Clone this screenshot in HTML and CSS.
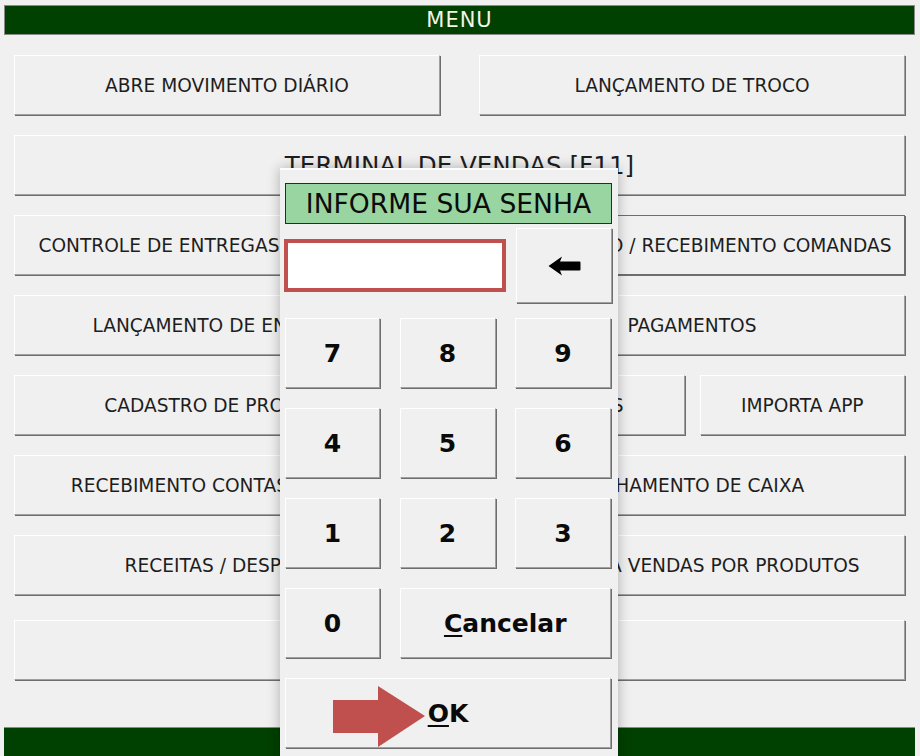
FILE: index.html
```html
<!DOCTYPE html>
<html lang="pt-BR">
<head>
<meta charset="utf-8">
<title>Menu</title>
<link rel="stylesheet" href="styles.css">
</head>
<body>
<div class="screen">
  <div class="titlebar">MENU</div>
  <div class="menu">
    <div class="row">
      <button class="btn">ABRE MOVIMENTO DIÁRIO</button>
      <button class="btn">LANÇAMENTO DE TROCO</button>
    </div>
    <div class="row row-single">
      <button class="btn btn-big">TERMINAL DE VENDAS [F11]</button>
    </div>
    <div class="row">
      <button class="btn">CONTROLE DE ENTREGAS DOS PEDIDOS</button>
      <button class="btn btn-focus">LANÇAMENTO / RECEBIMENTO COMANDAS</button>
    </div>
    <div class="row">
      <button class="btn">LANÇAMENTO DE ENTRADAS</button>
      <button class="btn">PAGAMENTOS</button>
    </div>
    <div class="row">
      <button class="btn">CADASTRO DE PRODUTOS</button>
      <div class="split">
        <button class="btn">PEDIDOS</button>
        <button class="btn">IMPORTA APP</button>
      </div>
    </div>
    <div class="row">
      <button class="btn">RECEBIMENTO CONTAS CLIENTES</button>
      <button class="btn">FECHAMENTO DE CAIXA</button>
    </div>
    <div class="row">
      <button class="btn">RECEITAS / DESPESAS</button>
      <button class="btn">CONSULTA VENDAS POR PRODUTOS</button>
    </div>
    <div class="row row-last">
      <button class="btn"></button>
      <button class="btn"></button>
    </div>
  </div>
  <div class="footer"></div>

  <div class="dialog">
    <div class="prompt">INFORME SUA SENHA</div>
    <div class="entry">
      <div class="password"></div>
      <button class="key key-back" aria-label="Apagar">
        <svg width="33" height="20" viewBox="0 0 33 20"><path d="M0.5 10 L14 0.5 L12 5.5 L31.5 5.5 Q32.5 5.5 32.5 6.5 L32.5 13.5 Q32.5 14.5 31.5 14.5 L12 14.5 L14 19.5 Z" fill="#000"/></svg>
      </button>
    </div>
    <div class="keypad">
      <button class="key">7</button>
      <button class="key">8</button>
      <button class="key">9</button>
      <button class="key">4</button>
      <button class="key">5</button>
      <button class="key">6</button>
      <button class="key">1</button>
      <button class="key">2</button>
      <button class="key">3</button>
      <button class="key">0</button>
      <button class="key key-cancel"><u>C</u>ancelar</button>
      <button class="key key-ok"><u>O</u>K</button>
    </div>
    <svg class="pointer" width="92" height="61" viewBox="0 0 92 61"><path d="M0 14 L45 14 L45 0 L92 30 L45 61 L45 47 L0 47 Z" fill="#c0504d"/></svg>
  </div>
</div>
</body>
</html>
```

FILE: styles.css
```css
* { box-sizing: border-box; }

html, body {
  margin: 0;
  padding: 0;
  background: #f0f0f0;
  overflow: hidden;
}

.screen {
  position: relative;
  width: 920px;
  height: 756px;
  padding-top: 5px;
  font-family: "DejaVu Sans", Verdana, sans-serif;
}

.titlebar {
  margin: 0 5px 0 4px;
  height: 30px;
  background: #004000;
  border: 1px solid #8a8a8a;
  color: #f4f4e6;
  font-size: 21px;
  letter-spacing: 1px;
  line-height: 28px;
  text-align: center;
}

.menu {
  padding: 20px 15px 0 14px;
  display: flex;
  flex-direction: column;
  gap: 20px;
}

.row {
  display: grid;
  grid-template-columns: 1fr 1fr;
  column-gap: 39px;
  height: 60px;
}

.row-single { grid-template-columns: 1fr; }
.row-last { margin-top: 5px; }

.split {
  display: grid;
  grid-template-columns: 1fr 1fr;
  column-gap: 15px;
}

.btn {
  font-family: "DejaVu Sans", Verdana, sans-serif;
  font-size: 18.6px;
  color: #1e1e1e;
  background: #f0f0f0;
  border: 1px solid;
  border-color: #ffffff #a0a0a0 #a0a0a0 #ffffff;
  box-shadow: 1px 1px 0 #6e6e6e;
  padding: 0;
  white-space: nowrap;
  overflow: hidden;
}

.btn-big { font-size: 24.6px; }

.btn-focus {
  border-color: #6e6e6e;
  box-shadow: 1px 1px 0 #6e6e6e;
}

.footer {
  margin: 47px 5px 0 4px;
  height: 32px;
  background: #004000;
  border-top: 1px solid #8a8a8a;
}

/* password dialog */
.dialog {
  position: absolute;
  left: 280px;
  top: 168px;
  width: 338px;
  height: 600px;
  background: #f0f0f0;
  border-top: 2px solid #fdfdfd;
  box-shadow: 0 0 12px rgba(0, 0, 0, 0.28);
  padding: 13px 6px 0 5px;
}

.prompt {
  height: 41px;
  background: #99d5a0;
  border: 1px solid #2a2a2a;
  font-size: 26.6px;
  line-height: 39px;
  text-align: center;
  color: #0c0c0c;
}

.entry {
  display: flex;
  justify-content: space-between;
  align-items: center;
  margin-top: 4px;
  height: 75px;
}

.password {
  width: 222px;
  height: 53px;
  margin-left: -1px;
  background: #ffffff;
  border: 4px solid #c0504d;
}

.keypad {
  display: grid;
  grid-template-columns: 95px 96px 96px;
  grid-auto-rows: 70px;
  column-gap: 19.5px;
  row-gap: 20px;
  margin-top: 15px;
}

.key {
  font-family: "DejaVu Sans", Verdana, sans-serif;
  font-weight: bold;
  font-size: 25px;
  color: #0a0a0a;
  background: #f0f0f0;
  border: 1px solid;
  border-color: #ffffff #a0a0a0 #a0a0a0 #ffffff;
  box-shadow: 1px 1px 0 #6e6e6e;
  padding: 0;
}

.key-back {
  width: 96px;
  height: 75px;
  display: flex;
  align-items: center;
  justify-content: center;
}

.key-cancel { grid-column: 2 / 4; }
.key-ok { grid-column: 1 / 4; }

.key u { text-underline-offset: 3px; text-decoration-thickness: 2px; }

.pointer {
  position: absolute;
  left: 53px;
  top: 516px;
}
```
